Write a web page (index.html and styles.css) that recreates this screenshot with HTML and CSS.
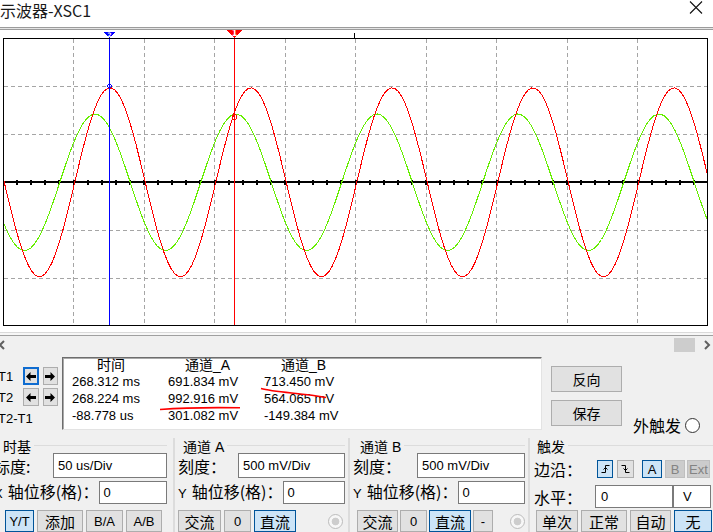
FILE: index.html
```html
<!DOCTYPE html>
<html lang="zh-CN">
<head>
  <meta charset="UTF-8">
  <meta name="viewport" content="width=device-width, initial-scale=1.0">
  <title>示波器-XSC1</title>
  <link rel="stylesheet" href="styles.css">
</head>
<body>
  <div class="title-bar">
    <span class="title">示波器-XSC1</span>
    <svg class="close" width="14" height="13" viewBox="0 0 14 13">
      <path d="M1 0.5L13 12.5M13 0.5L1 12.5" stroke="#111" stroke-width="1.1" fill="none"/>
    </svg>
  </div>
  <div class="title-rule"></div>

  <div class="screen">
    <svg id="scope" width="713" height="302" viewBox="0 30 713 302" shape-rendering="crispEdges">
      <defs>
        <clipPath id="plotClip"><rect x="4" y="39" width="703" height="286"/></clipPath>
      </defs>
      <path class="grid" d="M73.5 39V326M144.5 39V326M214.5 39V326M285.5 39V326M355.5 39V326M426.5 39V326M496.5 39V326M567.5 39V326M637.5 39V326M4 86.5H708M4 134.5H708M4 230.5H708M4 278.5H708"/>
      <rect x="4" y="181" width="704" height="2" fill="#000"/>
      <g id="ticks" fill="#000"></g>
      <path d="M354.5 33V38" stroke="#000"/>
      <g clip-path="url(#plotClip)" fill="none">
        <polyline id="waveB" stroke="#66ee00" stroke-width="1"/>
        <polyline id="waveA" stroke="#ff0000" stroke-width="1"/>
      </g>
      <path d="M109.5 38V326" stroke="#0000ff"/>
      <path d="M234.5 38V326" stroke="#ff0000" stroke-width="1.5"/>
      <rect x="3.5" y="38.5" width="704" height="287" fill="none" stroke="#000"/>
      <polygon points="103,32 116,32 109.5,38" fill="#0000ff"/>
      <text x="109.5" y="36.5" class="tag small">2</text>
      <polygon points="226,29 243,29 234.5,38" fill="#ff0000"/>
      <text x="234.5" y="36" class="tag">1</text>
      <path d="M109.5 83.5L112 86L109.5 88.5L107 86Z" fill="none" stroke="#0000ff"/>
      <circle cx="234.5" cy="117" r="2.5" fill="none" stroke="#ff0000"/>
    </svg>
  </div>
  <div class="screen-rule"></div>

  <div class="hscroll">
    <svg class="chev-left" width="7" height="10" viewBox="0 0 7 10"><path d="M6 1L2 5L6 9" stroke="#606060" stroke-width="2" fill="none"/></svg>
    <div class="thumb"></div>
    <svg class="chev-right" width="7" height="10" viewBox="0 0 7 10"><path d="M1 1L5 5L1 9" stroke="#606060" stroke-width="2" fill="none"/></svg>
  </div>

  <div class="panel">
    <div class="panel-top">
      <div class="cursors">
        <div class="cur-row">
          <span class="cur-label">T1</span>
          <button class="arrow-btn focus"><svg width="10" height="9" viewBox="0 0 10 9"><path d="M0 4.5L4.5 0V3H10V6H4.5V9Z"/></svg></button>
          <button class="arrow-btn"><svg width="10" height="9" viewBox="0 0 10 9"><path d="M10 4.5L5.5 0V3H0V6H5.5V9Z"/></svg></button>
        </div>
        <div class="cur-row">
          <span class="cur-label">T2</span>
          <button class="arrow-btn"><svg width="10" height="9" viewBox="0 0 10 9"><path d="M0 4.5L4.5 0V3H10V6H4.5V9Z"/></svg></button>
          <button class="arrow-btn"><svg width="10" height="9" viewBox="0 0 10 9"><path d="M10 4.5L5.5 0V3H0V6H5.5V9Z"/></svg></button>
        </div>
        <div class="cur-row">
          <span class="cur-label">T2-T1</span>
        </div>
      </div>

      <div class="readout">
        <span class="head h-time">时间</span>
        <span class="head">通道_A</span>
        <span class="head">通道_B</span>
        <span>268.312 ms</span><span>691.834 mV</span><span class="col-b">713.450 mV</span>
        <span>268.224 ms</span><span>992.916 mV</span><span class="col-b">564.065 mV</span>
        <span>-88.778 us</span><span>301.082 mV</span><span class="col-b">-149.384 mV</span>
        <svg class="marks" width="478" height="71" viewBox="0 0 478 71">
          <path d="M97 51.5Q130 49 177 49.8" />
          <path d="M198 30.5C212 34.5 240 35 263 39.5" />
        </svg>
      </div>

      <div class="actions">
        <button class="btn big">反向</button>
        <button class="btn big">保存</button>
      </div>

      <div class="ext-trigger">外触发<span class="radio live"></span></div>
    </div>

    <div class="groups">
      <div class="group g-time">
        <div class="group-head"><span>时基</span></div>
        <div class="row r1">
          <span class="lbl">标度:</span>
          <span class="field scale">50 us/Div</span>
        </div>
        <div class="row r2">
          <span class="lbl"><span class="lat">X</span>轴位移(格)：</span>
          <span class="field offset">0</span>
        </div>
        <div class="row r3">
          <button class="btn lat on yt">Y/T</button>
          <button class="btn add">添加</button>
          <button class="btn lat ba">B/A</button>
          <button class="btn lat ab">A/B</button>
        </div>
      </div>

      <div class="group g-cha">
        <div class="group-head"><span>通道 A</span></div>
        <div class="row r1">
          <span class="lbl">刻度：</span>
          <span class="field scale">500 mV/Div</span>
        </div>
        <div class="row r2">
          <span class="lbl"><span class="lat">Y</span>轴位移(格)：</span>
          <span class="field offset">0</span>
        </div>
        <div class="row r3">
          <button class="btn ac">交流</button>
          <button class="btn lat zero">0</button>
          <button class="btn on dc">直流</button>
          <span class="radio dis"></span>
        </div>
      </div>

      <div class="group g-chb">
        <div class="group-head"><span>通道 B</span></div>
        <div class="row r1">
          <span class="lbl">刻度：</span>
          <span class="field scale">500 mV/Div</span>
        </div>
        <div class="row r2">
          <span class="lbl"><span class="lat">Y</span>轴位移(格)：</span>
          <span class="field offset">0</span>
        </div>
        <div class="row r3">
          <button class="btn ac">交流</button>
          <button class="btn lat zero">0</button>
          <button class="btn on dc">直流</button>
          <button class="btn lat minus">-</button>
          <span class="radio dis"></span>
        </div>
      </div>

      <div class="group g-trig">
        <div class="group-head"><span>触发</span></div>
        <div class="row r1">
          <span class="lbl edge-lbl">边沿：</span>
          <button class="btn on edge rise"><svg width="9" height="10" viewBox="0 0 9 10"><path d="M0.5 8.5H4.5V1.5H8.5M2.5 5.5L4.5 3.5L6.5 5.5" stroke="#000" fill="none"/></svg></button>
          <button class="btn edge fall"><svg width="9" height="10" viewBox="0 0 9 10"><path d="M0.5 1.5H4.5V8.5H8.5M2.5 4.5L4.5 6.5L6.5 4.5" stroke="#000" fill="none"/></svg></button>
          <button class="btn lat on src-a">A</button>
          <button class="btn lat off src-b">B</button>
          <button class="btn lat off src-ext">Ext</button>
        </div>
        <div class="row r2">
          <span class="lbl level-lbl">水平：</span>
          <span class="field level">0</span>
          <span class="field unit">V</span>
        </div>
        <div class="row r3">
          <button class="btn once">单次</button>
          <button class="btn normal">正常</button>
          <button class="btn auto">自动</button>
          <button class="btn on none">无</button>
        </div>
      </div>
    </div>
  </div>

  <script>
    const svgNs = 'http://www.w3.org/2000/svg';

    // sine traces: 141 px per period, centre line at y = 182.3
    function drawWave(id, amp, peakX) {
      const pts = [];
      for (let x = 3; x < 708; x += 3.5) {
        const y = 182.3 - amp * Math.cos(2 * Math.PI * (x - peakX) / 141);
        pts.push(x.toFixed(1) + ',' + y.toFixed(1));
      }
      const yEnd = 182.3 - amp * Math.cos(2 * Math.PI * (708 - peakX) / 141);
      pts.push('708,' + yEnd.toFixed(1));
      document.getElementById(id).setAttribute('points', pts.join(' '));
    }
    drawWave('waveA', 94.5, 110);
    drawWave('waveB', 68.3, 95);

    // minor ticks on the centre axis, five per division
    const ticks = document.getElementById('ticks');
    for (let k = 1; k < 50; k++) {
      const tick = document.createElementNS(svgNs, 'rect');
      tick.setAttribute('x', Math.round(3 + k * 14.1) - 1);
      tick.setAttribute('y', 180);
      tick.setAttribute('width', 2);
      tick.setAttribute('height', 5);
      ticks.appendChild(tick);
    }
  </script>
</body>
</html>
```

FILE: styles.css
```css
* {
  box-sizing: border-box;
}
body {
  margin: 0;
  width: 713px;
  height: 532px;
  overflow: hidden;
  background: #f0f0f0;
  font-family: "Liberation Sans", "Noto Sans CJK SC", sans-serif;
  font-size: 13px;
  color: #000;
}
button {
  font: inherit;
  color: inherit;
  padding: 0;
  margin: 0;
}

/* title */
.title-bar {
  height: 27px;
  background: #fff;
  display: flex;
  justify-content: space-between;
  align-items: flex-start;
}
.title {
  font-family: "Noto Sans CJK SC", sans-serif;
  font-size: 16px;
  line-height: 18px;
  padding-top: 1px;
  color: #1a1a1a;
}
.close {
  margin: 1px 10px 0 0;
}
.title-rule {
  height: 3px;
  border-top: 1px solid #9c9c9c;
  border-bottom: 1px solid #9c9c9c;
  background: #e4e4e4;
}

/* scope screen */
.screen {
  height: 302px;
  background: #fff;
}
.screen svg {
  display: block;
}
.grid {
  fill: none;
  stroke: #a5a5a5;
  stroke-dasharray: 4 3;
}
.tag {
  fill: #fff;
  font-family: "DejaVu Sans", sans-serif;
  font-size: 8px;
  font-weight: bold;
  text-anchor: middle;
}
.tag.small {
  font-size: 6px;
}
.screen-rule {
  height: 4px;
  border-top: 1px solid #dadada;
  border-bottom: 1px solid #a0a0a0;
  background: #f7f7f7;
}
.hscroll {
  height: 18px;
  display: flex;
  align-items: center;
  padding-right: 2px;
}
.chev-left {
  margin-left: -2px;
}
.hscroll .thumb {
  margin-left: auto;
  width: 21px;
  height: 14px;
  background: #cdcdcd;
}
.chev-right {
  margin-left: 9px;
}

/* bottom panel, scrolled a few pixels to the right */
.panel {
  margin-left: -8px;
  width: 721px;
}
.panel-top {
  display: flex;
  height: 84px;
}
.cursors {
  width: 70px;
  flex: none;
  padding: 13px 0 0 6px;
}
.cur-row {
  display: flex;
  align-items: center;
  height: 18px;
  margin-bottom: 3px;
}
.cur-label {
  width: 25px;
  flex: none;
  font-size: 13px;
  white-space: nowrap;
}
.arrow-btn {
  width: 16px;
  height: 18px;
  margin-right: 4px;
  background: #e1e1e1;
  border: 1px solid #adadad;
  display: flex;
  align-items: center;
  justify-content: center;
}
.arrow-btn.focus {
  border: 2px solid #0f6cd0;
}
.arrow-btn svg {
  display: block;
  fill: #000;
}

.readout {
  position: relative;
  flex: none;
  margin-top: 3px;
  width: 480px;
  height: 73px;
  background: #fff;
  border: 1px solid;
  border-color: #6d6d6d #e3e3e3 #e3e3e3 #6d6d6d;
  box-shadow: inset 1px 1px 0 #a9a9a9;
  padding-left: 9px;
  display: grid;
  grid-template-columns: 96px 96px 70px;
  grid-template-rows: 15px repeat(3, 17px);
  line-height: 17px;
  white-space: nowrap;
}
.readout .head {
  font-size: 14px;
  line-height: 15px;
  padding-left: 17px;
}
.readout .h-time {
  padding-left: 25px;
}
.readout .col-b {
  text-align: right;
}
.marks {
  position: absolute;
  left: 0;
  top: 0;
  fill: none;
  stroke: #ff0000;
  stroke-width: 1.6;
}

.actions {
  margin-left: 9px;
  padding-top: 12px;
  display: flex;
  flex-direction: column;
  gap: 8px;
}
.btn {
  height: 100%;
  background: #e1e1e1;
  border: 1px solid #adadad;
  display: flex;
  align-items: center;
  justify-content: center;
  font-family: "Noto Sans CJK SC", sans-serif;
  font-size: 15px;
  line-height: 1;
  white-space: nowrap;
}
.btn.big {
  width: 71px;
  height: 26px;
  font-size: 14px;
}
.btn.lat {
  font-family: "Liberation Sans", sans-serif;
  font-size: 13px;
}
.btn.on {
  background: #cce4f7;
  border-color: #005499;
}
.btn.off {
  background: #cccccc;
  border-color: #bfbfbf;
  color: #838383;
}
.ext-trigger {
  margin: 62px 0 0 11px;
  display: flex;
  align-items: center;
  height: 18px;
  font-family: "Noto Sans CJK SC", sans-serif;
  font-size: 16px;
  white-space: nowrap;
}
.radio {
  width: 15px;
  height: 15px;
  border-radius: 50%;
  flex: none;
}
.radio.live {
  margin-left: 4px;
  background: #fff;
  border: 1px solid #333;
}
.radio.dis {
  margin-left: auto;
  border: 1px solid #bcbcbc;
  background: radial-gradient(circle, #cdcdcd 0 3.5px, #f7f7f7 4.2px);
}

/* group boxes */
.groups {
  display: flex;
  height: 94px;
}
.group {
  display: flex;
  flex-direction: column;
  flex: none;
  border-right: 2px solid #dcdcdc;
}
.g-time {
  width: 183px;
  padding: 0 6px 0 2px;
}
.g-cha {
  width: 175px;
  padding: 0 3px 0 3px;
}
.g-chb {
  width: 180px;
  padding: 0 3px 0 3px;
}
.g-trig {
  width: 183px;
  padding: 0 0 0 4px;
  border-right: none;
}
.group-head {
  display: flex;
  align-items: center;
  height: 15px;
  font-size: 14px;
  white-space: nowrap;
}
.group-head::after {
  content: "";
  flex: 1;
  border-top: 1px solid #dcdcdc;
  margin-left: 3px;
}
.g-time .group-head span { margin-left: 9px; }
.g-cha .group-head span { margin-left: 5px; }
.g-chb .group-head span { margin-left: 7px; }
.g-trig .group-head span { margin-left: 3px; }

.row {
  display: flex;
  align-items: center;
}
.r1 {
  height: 25px;
}
.r2 {
  height: 23px;
  margin-top: 3px;
}
.r3 {
  height: 22px;
  margin-top: 6px;
  gap: 3px;
}
.lbl {
  font-family: "Noto Sans CJK SC", sans-serif;
  font-size: 16px;
  line-height: 18px;
  white-space: nowrap;
}
.lbl .lat {
  font-family: "Liberation Sans", sans-serif;
  font-size: 13px;
  margin-right: 5px;
}
.field {
  margin-left: auto;
  height: 100%;
  background: #fff;
  border: 1px solid #7a7a7a;
  padding-left: 4px;
  display: flex;
  align-items: center;
  font-size: 13px;
}
.g-time .scale { width: 114px; }
.g-time .offset { width: 70px; }
.g-cha .scale { width: 107px; }
.g-cha .offset { width: 68px; }
.g-chb .scale { width: 108px; }
.g-chb .offset { width: 70px; }

.g-time .r3 .yt { margin-left: 11px; width: 29px; }
.g-time .r3 .add { width: 46px; }
.g-time .r3 .ba { width: 37px; }
.g-time .r3 .ab { width: 36px; }

.g-cha .ac { width: 43px; }
.g-cha .zero { width: 27px; }
.g-cha .dc { width: 42px; }
.g-cha .radio.dis { margin-right: 2px; }

.g-chb .r3 { gap: 2px; }
.g-chb .ac { margin-left: 4px; width: 41px; }
.g-chb .zero { width: 27px; }
.g-chb .dc { width: 42px; }
.g-chb .minus { width: 20px; }

/* trigger */
.g-trig .r1 {
  height: 22px;
  margin-top: 5px;
}
.g-trig .r2 {
  margin-top: 5px;
}
.g-trig .r3 {
  margin-top: 2px;
}
.edge-lbl { width: 63px; }
.level-lbl { width: 61px; }
.g-trig .r1 .btn {
  height: 18px;
}
.rise { width: 16px; }
.fall { width: 17px; margin-left: 4px; }
.src-a { width: 20px; margin-left: 8px; }
.src-b { width: 20px; margin-left: 3px; }
.src-ext { width: 23px; margin-left: 2px; }
.g-trig .field {
  margin-left: 0;
}
.level { width: 78px; padding-left: 5px; }
.unit { width: 38px; margin-left: 1px; padding-left: 9px; }
.once { margin-left: 2px; width: 42px; }
.normal { width: 46px; }
.auto { width: 41px; }
.none { width: 38px; }
```
